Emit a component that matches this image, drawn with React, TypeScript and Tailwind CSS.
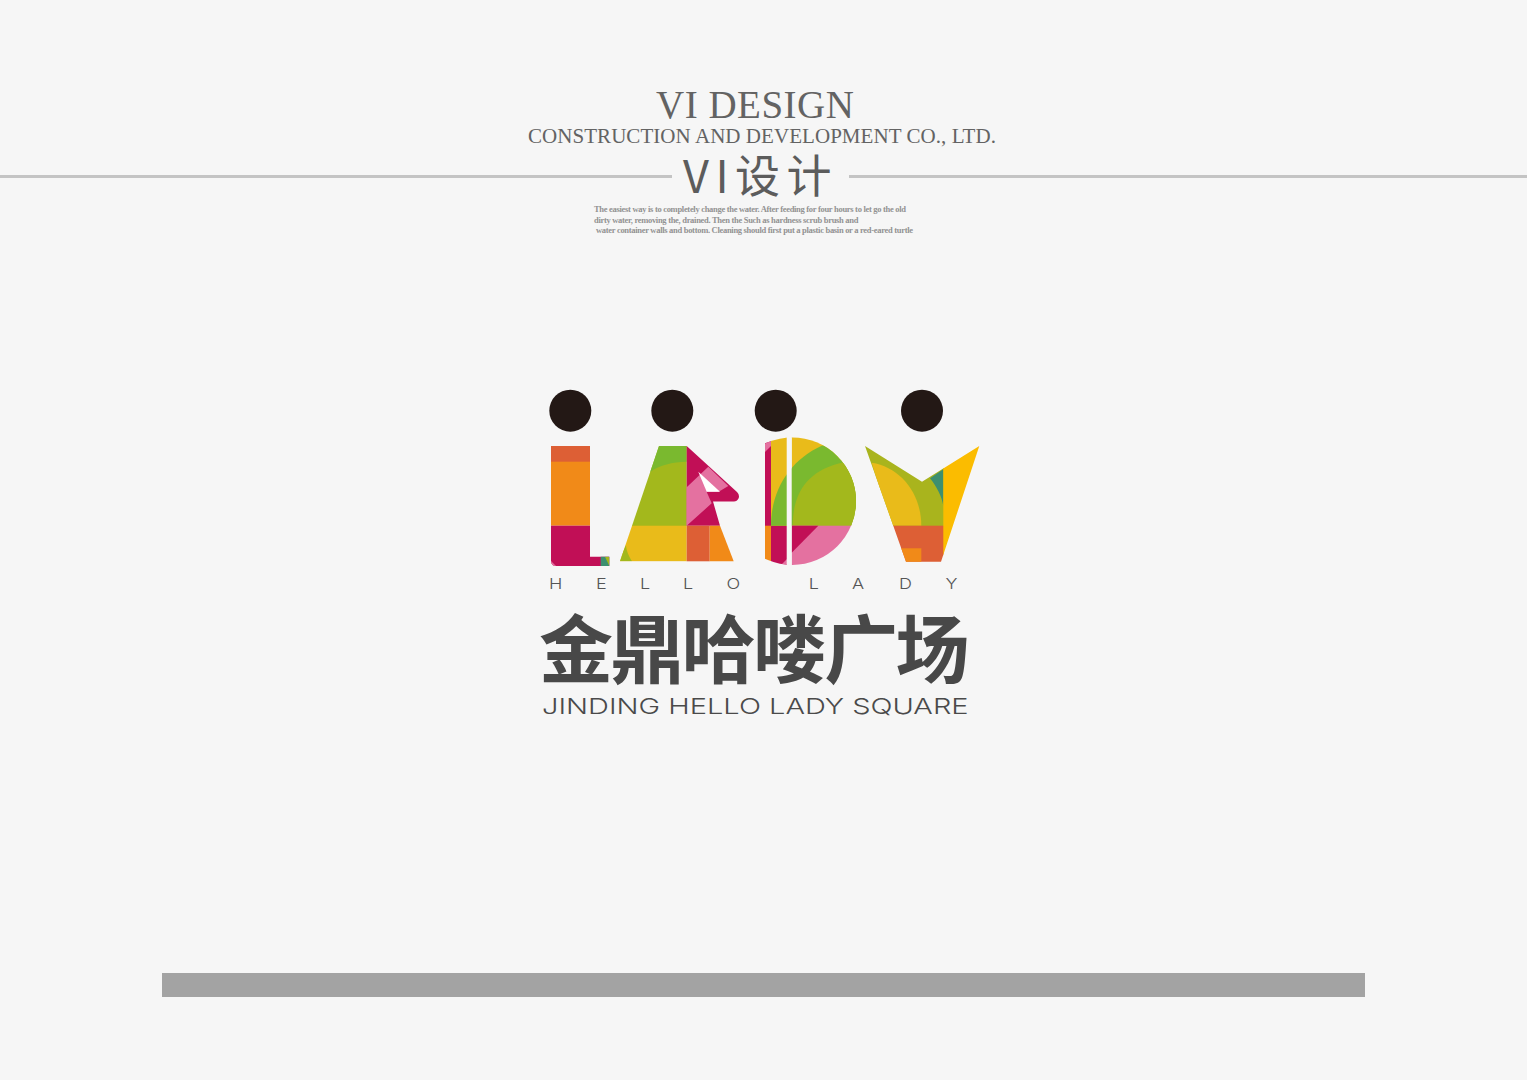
const MAGENTA = "#c10f56";
const PINK = "#e471a0";
const ORANGE = "#f18a18";
const RED = "#dd5f35";
const YELLOW = "#e9bb1a";
const GREEN = "#7ab92f";
const OLIVE = "#a3b81c";
const DOT = "#231815";

function Logo() {
  return (
    <svg viewBox="530 380 460 220" width="460" height="220" className="block" xmlns="http://www.w3.org/2000/svg">
      <defs>
        <clipPath id="a-left"><path d="M659 446H686.7V561.3H620Z" /></clipPath>
        <clipPath id="d-shape"><circle cx="792.3" cy="501.2" r="63.7" /></clipPath>
        <clipPath id="v-shape"><path d="M865 446L922 481.7L979.3 446L941 561.7H906Z" /></clipPath>
        <clipPath id="l-shape"><path d="M551 446H590V556.7H609.3V566H556Q551 566 551 561Z" /></clipPath>
      </defs>

      {[570.3, 672.3, 775.7, 922].map((cx) => (
        <circle key={cx} cx={cx} cy="410.7" r="21" fill={DOT} />
      ))}

      {/* L */}
      <g clipPath="url(#l-shape)">
        <rect x="551" y="446" width="39" height="16" fill={RED} />
        <rect x="551" y="461.7" width="39" height="64" fill={ORANGE} />
        <rect x="551" y="525.7" width="59" height="41" fill={MAGENTA} />
        <rect x="600.7" y="556" width="9" height="11" fill="#3d8f6f" />
        <path d="M605 556.7H609.3V566Z" fill={OLIVE} />
        <path d="M551 561L556 566H551Z" fill={PINK} />
      </g>

      {/* A */}
      <g clipPath="url(#a-left)">
        <rect x="620" y="446" width="67" height="80" fill={OLIVE} />
        <path d="M650 472C660 465 672 462 686.7 461.7V446H650Z" fill={GREEN} />
        <rect x="620" y="525.7" width="67" height="36" fill={YELLOW} />
        <path d="M618 561.3H632C628 555 626 549 626 545Z" fill={OLIVE} />
      </g>
      <path d="M686.7 446L737 492Q740 495 738.5 498.5Q737 501.5 734 501.5H713L720 525.7H686.7Z" fill={MAGENTA} />
      <path d="M686.7 487.3L708.3 466.7L728.3 486L718.3 492H706.7L711.7 503.3L686.7 525.7Z" fill={PINK} />
      <path d="M698.3 471.7L720 491.7H706.7Z" fill="#ffffff" />
      <rect x="686.7" y="525.7" width="23" height="35.6" fill={RED} />
      <path d="M709.7 525.7H720L733.7 561.3H709.7Z" fill={ORANGE} />

      {/* D */}
      <g clipPath="url(#d-shape)">
        <rect x="765" y="436" width="6" height="90" fill={MAGENTA} />
        <rect x="765" y="525.7" width="6" height="40" fill={ORANGE} />
        <path d="M765 444L771 438V446L765 452Z" fill={PINK} />
        <rect x="771" y="436" width="16" height="90" fill={YELLOW} />
        <rect x="771" y="525.7" width="16" height="40" fill={MAGENTA} />
        <path d="M781 565L787 559V566H781Z" fill={PINK} />
        <rect x="791.7" y="436" width="70" height="90" fill={YELLOW} />
        <path d="M771 525.7C771 490 790 460 821.7 445.7L860 440V525.7Z" fill={GREEN} />
        <path d="M792.7 525.7C792.7 490 810 470 841.7 462.7H862V525.7Z" fill={OLIVE} />
        <rect x="791.7" y="525.7" width="70" height="40" fill={PINK} />
        <path d="M791.7 525.7H818.3L791.7 552.7Z" fill={MAGENTA} />
        <rect x="786.7" y="436" width="5" height="130" fill="#f6f6f6" />
      </g>

      {/* V */}
      <g clipPath="url(#v-shape)">
        <rect x="860" y="440" width="84" height="86" fill="#a9b41d" />
        <path d="M871.7 462.7C900 467 921.3 493 921.3 525.7H890L871.7 462.7Z" fill={YELLOW} />
        <path d="M930 478.3L943.3 469.3V506C942 497 937 487 930 478.3Z" fill="#3d8f6f" />
        <rect x="860" y="525.7" width="84" height="40" fill={RED} />
        <rect x="900" y="548.3" width="21.3" height="15" fill={ORANGE} />
        <path d="M943.3 440H985V570H943.3Z" fill="#fbbc00" />
      </g>

      <g transform="scale(1.2 1)">
        <text
          x="457.5 496.7 533.3 569.2 605.4 674 710 749.2 788"
          y="589"
          fill="#555555"
          fontSize="15"
          fontFamily="Inter, 'Liberation Sans', sans-serif"
          fontWeight="300"
        >
          HELLOLADY
        </text>
      </g>
    </svg>
  );
}

export default function App() {
  return (
    <div className="h-[1080px] bg-[#f6f6f6] flex flex-col overflow-hidden">
      <header className="pt-[83px] flex flex-col text-[#636363]" style={{ fontFamily: "'Liberation Serif', serif" }}>
        <h1 className="ml-[656px] text-[39px] leading-[44px] font-normal whitespace-nowrap tracking-[0.5px]">VI DESIGN</h1>
        <p className="ml-[528px] text-[21px] leading-[20px] whitespace-nowrap tracking-[0.05px] -mt-[1px]">
          CONSTRUCTION AND DEVELOPMENT CO., LTD.
        </p>
        <div className="flex items-center h-[48px] mt-[6px]">
          <div className="w-[672px] h-[3px] bg-[#c4c4c4]" />
          <div
            className="w-[177px] pl-[11px] -mt-[4px] text-[45px] leading-[48px] whitespace-nowrap text-[#5c5c5c] tracking-[6.5px]"
            style={{ fontFamily: "'Noto Sans CJK SC', sans-serif", fontWeight: 400 }}
          >
            VI设计
          </div>
          <div className="flex-1 h-[3px] bg-[#c4c4c4]" />
        </div>
        <div className="mt-[4px] text-[8.5px] leading-[10.7px] font-bold text-[#929292] whitespace-pre tracking-[-0.3px]">
          <p className="ml-[594px]">The easiest way is to completely change the water. After feeding for four hours to let go the old</p>
          <p className="ml-[594px]">dirty water, removing the, drained. Then the Such as hardness scrub brush and</p>
          <p className="ml-[596px]">water container walls and bottom. Cleaning should first put a plastic basin or a red-eared turtle</p>
        </div>
      </header>

      <section className="ml-[530px] mt-[144px]">
        <Logo />
        <div
          className="ml-[9px] mt-[8px] text-[74px] leading-[74px] font-bold text-[#484848] whitespace-nowrap tracking-[-2.7px]"
          style={{ fontFamily: "'Noto Sans CJK SC', sans-serif" }}
        >
          金鼎哈喽广场
        </div>
        <div
          className="ml-[12px] mt-[11px] text-[22px] leading-[26px] font-light text-[#4a4a4a] whitespace-nowrap origin-left scale-x-[1.318] w-fit"
          style={{ fontFamily: "Inter, 'Liberation Sans', sans-serif" }}
        >
          JINDING HELLO LADY SQUARE
        </div>
      </section>

      <div className="mt-auto mb-[83px] mx-[162px] h-[24px] bg-[#a3a3a3]" />
    </div>
  );
}
